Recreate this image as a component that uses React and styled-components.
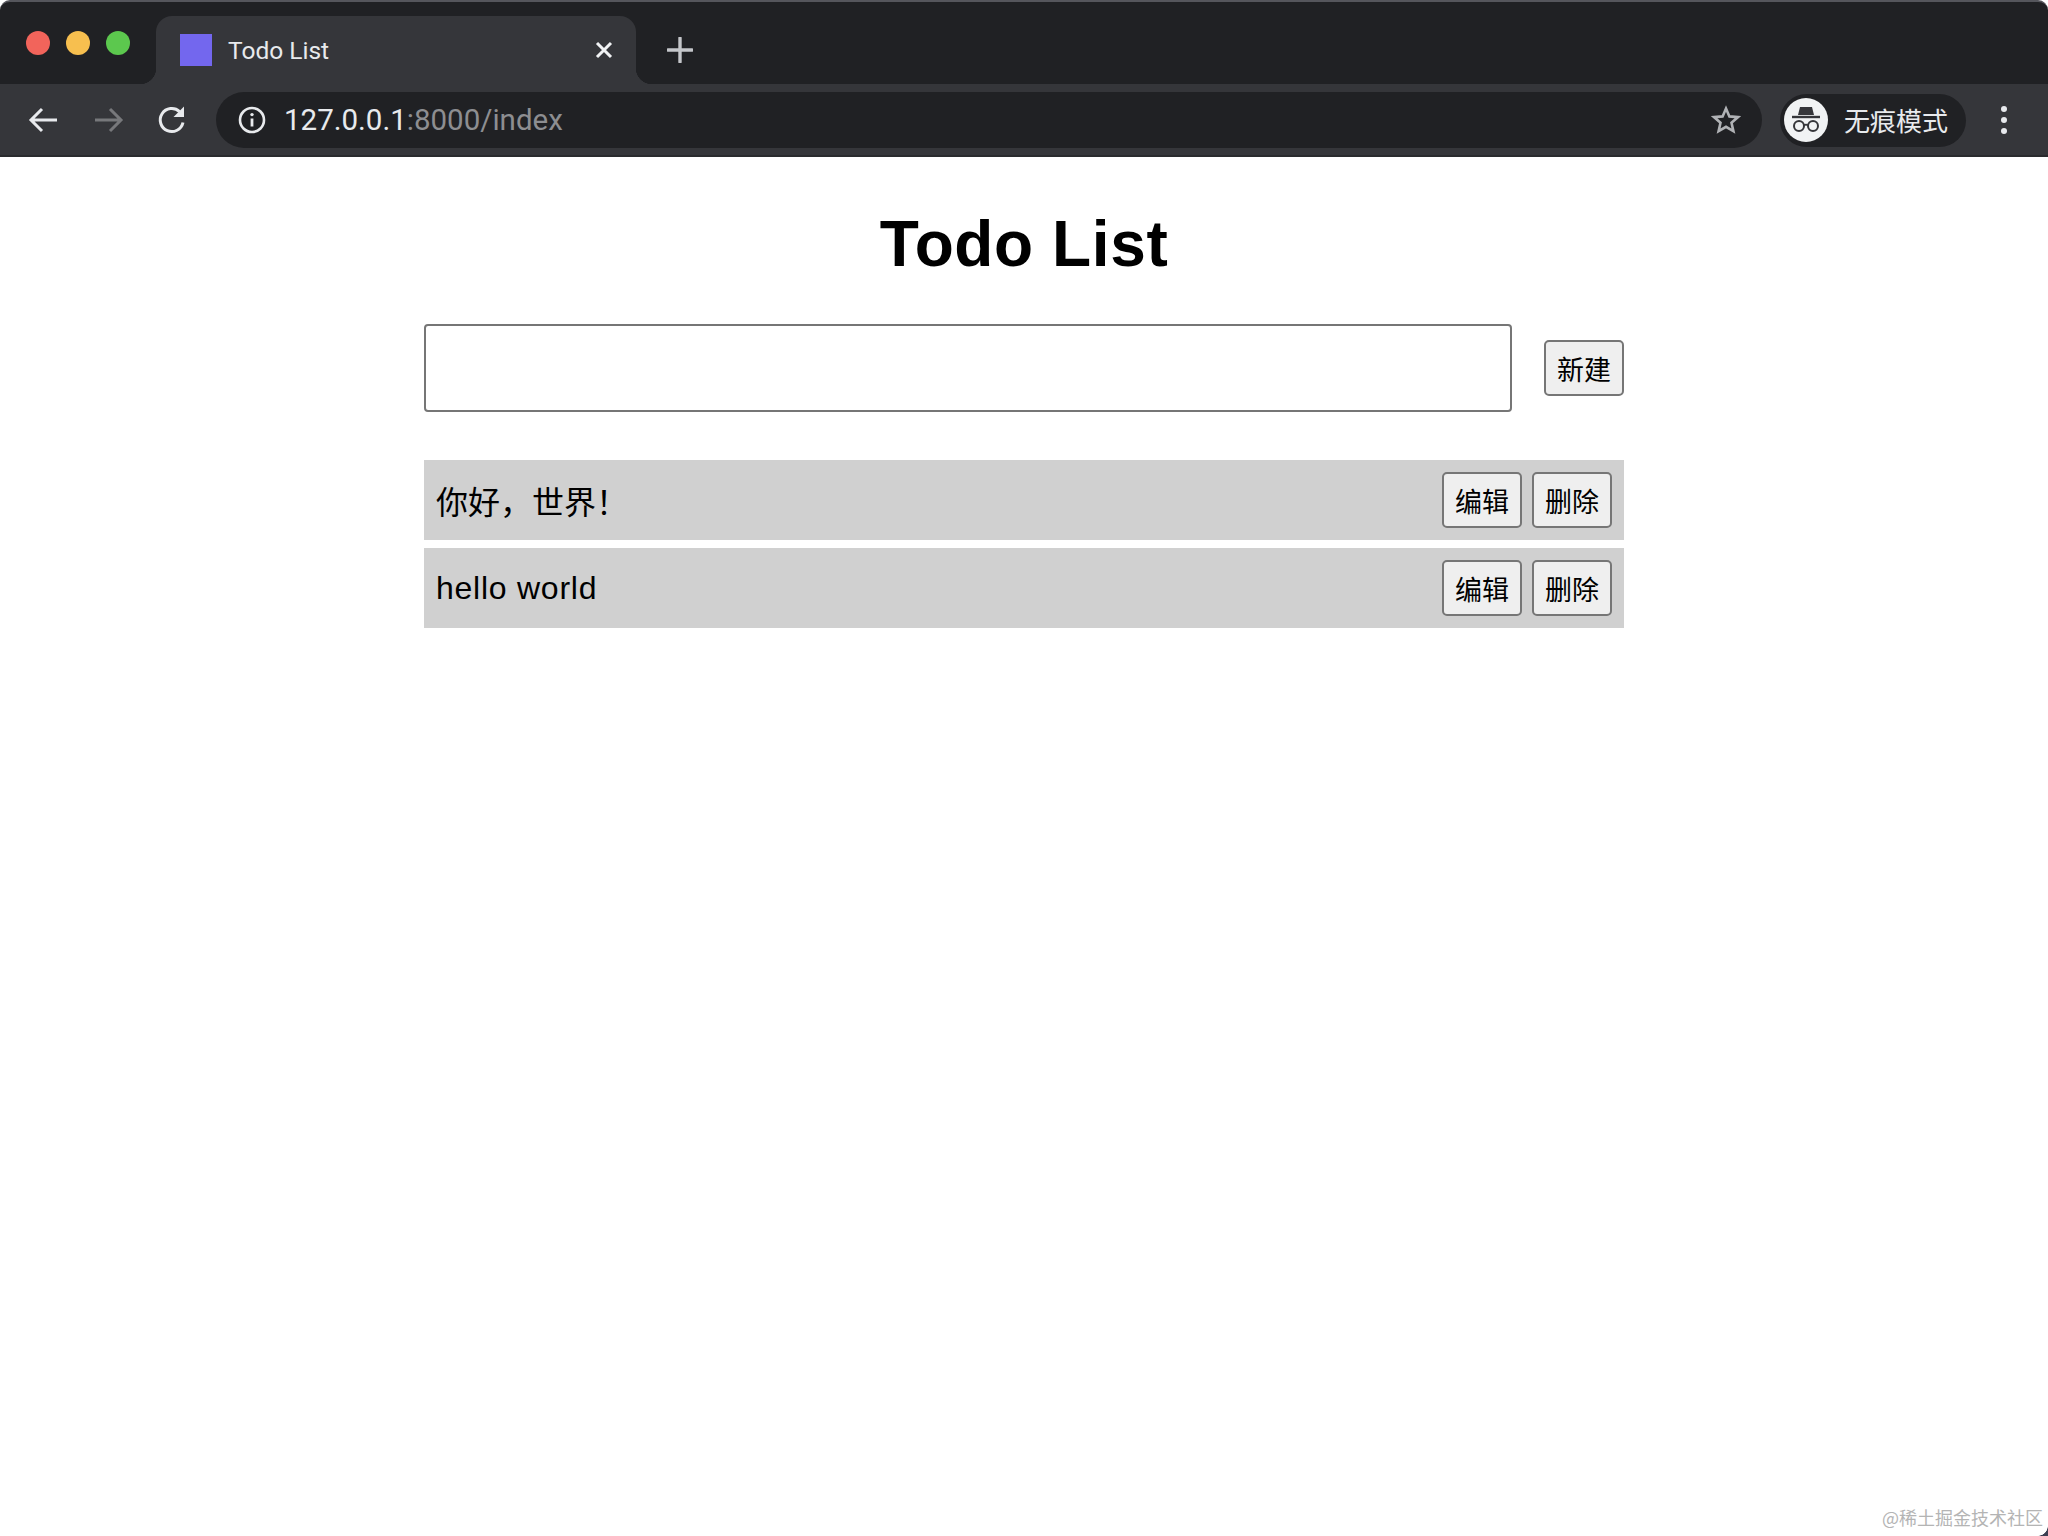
import React from "react";
import styled, { createGlobalStyle } from "styled-components";

const GlobalStyle = createGlobalStyle`
  html, body {
    margin: 0;
    padding: 0;
    background: #fff;
  }
`;

const cjkStack = `"Liberation Sans", "Noto Sans CJK SC", sans-serif`;

const Page = styled.div`
  position: relative;
  width: 2048px;
  height: 1536px;
  overflow: hidden;
  background: #fff;
  color: #000;
  font-family: ${cjkStack};
`;

const TabStrip = styled.div`
  display: flex;
  align-items: flex-end;
  height: 84px;
  padding-left: 156px;
  box-sizing: border-box;
  background: #202124;
  border-top: 2px solid #55565c;
  border-radius: 10px 10px 0 0;
`;

const Lights = styled.div`
  position: absolute;
  left: 26px;
  top: 31px;
  display: flex;
  gap: 16px;
`;

const Light = styled.span`
  width: 24px;
  height: 24px;
  border-radius: 50%;
  background: ${(p) => p.$color};
`;

const Tab = styled.div`
  position: relative;
  display: flex;
  align-items: center;
  width: 480px;
  height: 68px;
  padding: 0 22px 0 24px;
  box-sizing: border-box;
  border-radius: 16px 16px 0 0;
  background: #35363a;

  &::before,
  &::after {
    content: "";
    position: absolute;
    bottom: 0;
    width: 16px;
    height: 16px;
  }
  &::before {
    left: -16px;
    background: radial-gradient(circle at 0 0, transparent 16px, #35363a 16.5px);
  }
  &::after {
    right: -16px;
    background: radial-gradient(circle at 100% 0, transparent 16px, #35363a 16.5px);
  }
`;

const Favicon = styled.span`
  flex: none;
  width: 32px;
  height: 32px;
  background: #7367ee;
`;

const TabTitle = styled.span`
  flex: 1;
  margin-left: 16px;
  font-family: Roboto, "Liberation Sans", sans-serif;
  font-size: 24.5px;
  color: #e8eaed;
`;

const NewTab = styled.svg`
  margin: 14px 0 0 31px;
  align-self: center;
`;

const Toolbar = styled.div`
  display: flex;
  align-items: center;
  height: 73px;
  box-sizing: border-box;
  padding: 1px 0 0 28px;
  background: #35363a;
  border-bottom: 2px solid #2a2b2e;
`;

const NavIcon = styled.svg`
  flex: none;
  margin-right: ${(p) => p.$gap}px;
`;

const AddressBar = styled.div`
  display: flex;
  align-items: center;
  width: 1546px;
  height: 56px;
  padding: 0 21px 0 22px;
  box-sizing: border-box;
  border-radius: 28px;
  background: #202124;
`;

const Url = styled.div`
  flex: 1;
  margin-left: 18px;
  font-family: Roboto, "Liberation Sans", sans-serif;
  font-size: 29.5px;
  color: #e8eaed;
`;

const UrlRest = styled.span`
  color: #8d8e91;
`;

const ProfilePill = styled.div`
  display: flex;
  align-items: center;
  width: 186px;
  height: 53px;
  margin-left: 18px;
  padding-left: 4px;
  box-sizing: border-box;
  border-radius: 27px;
  background: #202124;
`;

const Avatar = styled.div`
  display: flex;
  align-items: center;
  justify-content: center;
  width: 44px;
  height: 44px;
  border-radius: 50%;
  background: #f1f3f4;
`;

const ProfileName = styled.span`
  margin-left: 16px;
  padding-bottom: 2px;
  font-family: "Noto Sans CJK SC", sans-serif;
  font-size: 26px;
  color: #e8eaed;
  white-space: nowrap;
`;

const MenuDots = styled.div`
  display: flex;
  flex-direction: column;
  gap: 5px;
  margin-left: 35px;
`;

const Dot = styled.span`
  width: 6px;
  height: 6px;
  border-radius: 50%;
  background: #e8eaed;
`;

const Content = styled.main`
  width: 1200px;
  margin: 0 auto;
`;

const Title = styled.h1`
  margin: 50px 0 43px;
  font-size: 64px;
  line-height: 74px;
  font-weight: 700;
  letter-spacing: 0.6px;
  text-align: center;
`;

const NewRow = styled.form`
  display: flex;
  align-items: center;
  justify-content: space-between;
  margin-bottom: 48px;
`;

const TodoInput = styled.input`
  width: 1088px;
  height: 88px;
  box-sizing: border-box;
  border: 2px solid #767676;
  border-radius: 4px;
  background: #fff;
  outline: none;
`;

const Button = styled.button`
  width: 80px;
  height: 56px;
  padding: 7px 0 0;
  box-sizing: border-box;
  border: 2px solid #767676;
  border-radius: 5px;
  background: #efefef;
  color: #000;
  font-family: ${cjkStack};
  font-size: 27px;
  line-height: 1;
`;

const TodoList = styled.ul`
  display: flex;
  flex-direction: column;
  gap: 8px;
  margin: 0;
  padding: 0;
  list-style: none;
`;

const TodoRow = styled.li`
  display: flex;
  align-items: center;
  height: 80px;
  padding: 0 12px;
  box-sizing: border-box;
  background: #d0d0d0;
`;

const TodoText = styled.span`
  flex: 1;
  font-size: 32px;
  letter-spacing: ${(p) => p.$spacing}px;
`;

const RowActions = styled.div`
  display: flex;
  gap: 10px;
`;

const Watermark = styled.div`
  position: absolute;
  right: 5px;
  bottom: 6px;
  font-family: "Noto Sans CJK SC", serif;
  font-size: 18px;
  color: #b4b4b4;
  white-space: nowrap;
`;

const CornerMark = styled.div`
  position: absolute;
  right: 0;
  bottom: 0;
  width: 10px;
  height: 10px;
  background: radial-gradient(circle at 0 0, transparent 9.5px, #3c3f52 10px);
`;

const todos = [
  { text: "你好，世界！", spacing: 0 },
  { text: "hello world", spacing: 0.75 },
];

function ArrowIcon({ flip, color, gap }) {
  return (
    <NavIcon $gap={gap} width="32" height="32" viewBox="0 0 32 32">
      <path
        d={flip ? "M3 16H28M18 5L29 16L18 27" : "M29 16H4M14 5L3 16L14 27"}
        fill="none"
        stroke={color}
        strokeWidth="3"
      />
    </NavIcon>
  );
}

function App() {
  return (
    <Page>
      <GlobalStyle />
      <Lights>
        <Light $color="#f2645b" />
        <Light $color="#f7bf4f" />
        <Light $color="#5cc84e" />
      </Lights>
      <TabStrip>
        <Tab>
          <Favicon />
          <TabTitle>Todo List</TabTitle>
          <svg width="20" height="20" viewBox="0 0 20 20">
            <path d="M3 3L17 17M17 3L3 17" stroke="#f1f3f4" strokeWidth="3" />
          </svg>
        </Tab>
        <NewTab width="26" height="26" viewBox="0 0 26 26">
          <path d="M13 1V25M1 13H25" stroke="#c4c6ca" strokeWidth="3.4" strokeLinecap="round" />
        </NewTab>
      </TabStrip>
      <Toolbar>
        <ArrowIcon color="#e8eaed" gap={32} />
        <ArrowIcon flip color="#77787b" gap={32} />
        <NavIcon $gap={28} width="32" height="32" viewBox="0 0 32 32">
          <path
            d="M27 18.5A11.5 11.5 0 1 1 23.6 7.6"
            fill="none"
            stroke="#e8eaed"
            strokeWidth="3"
          />
          <path d="M28 2.5V13H17.5Z" fill="#e8eaed" />
        </NavIcon>
        <AddressBar>
          <svg width="28" height="28" viewBox="0 0 28 28">
            <circle cx="14" cy="14" r="12" fill="none" stroke="#e8eaed" strokeWidth="2.6" />
            <path d="M14 12.5V20.5" stroke="#e8eaed" strokeWidth="2.8" />
            <circle cx="14" cy="8.6" r="1.7" fill="#e8eaed" />
          </svg>
          <Url>
            127.0.0.1<UrlRest>:8000/index</UrlRest>
          </Url>
          <svg width="30" height="30" viewBox="0 0 30 30">
            <path
              d="M15 3.5L18.4 11.4L27 12.1L20.5 17.8L22.4 26.2L15 21.8L7.6 26.2L9.5 17.8L3 12.1L11.6 11.4Z"
              fill="none"
              stroke="#b0b2b5"
              strokeWidth="2.6"
              strokeLinejoin="miter"
            />
          </svg>
        </AddressBar>
        <ProfilePill>
          <Avatar>
            <svg width="30" height="30" viewBox="0 0 30 30">
              <path d="M9 2H21L23 10H7Z" fill="#35363a" />
              <path d="M1 12H29" stroke="#35363a" strokeWidth="2.4" />
              <circle cx="8" cy="21" r="5" fill="none" stroke="#35363a" strokeWidth="2" />
              <circle cx="22" cy="21" r="5" fill="none" stroke="#35363a" strokeWidth="2" />
              <path d="M13 20.5C14 19.5 16 19.5 17 20.5" fill="none" stroke="#35363a" strokeWidth="2" />
            </svg>
          </Avatar>
          <ProfileName>无痕模式</ProfileName>
        </ProfilePill>
        <MenuDots>
          <Dot />
          <Dot />
          <Dot />
        </MenuDots>
      </Toolbar>
      <Content>
        <Title>Todo List</Title>
        <NewRow>
          <TodoInput type="text" />
          <Button type="button">新建</Button>
        </NewRow>
        <TodoList>
          {todos.map((todo) => (
            <TodoRow key={todo.text}>
              <TodoText $spacing={todo.spacing}>{todo.text}</TodoText>
              <RowActions>
                <Button type="button">编辑</Button>
                <Button type="button">删除</Button>
              </RowActions>
            </TodoRow>
          ))}
        </TodoList>
      </Content>
      <Watermark>@稀土掘金技术社区</Watermark>
      <CornerMark />
    </Page>
  );
}

export default App;
